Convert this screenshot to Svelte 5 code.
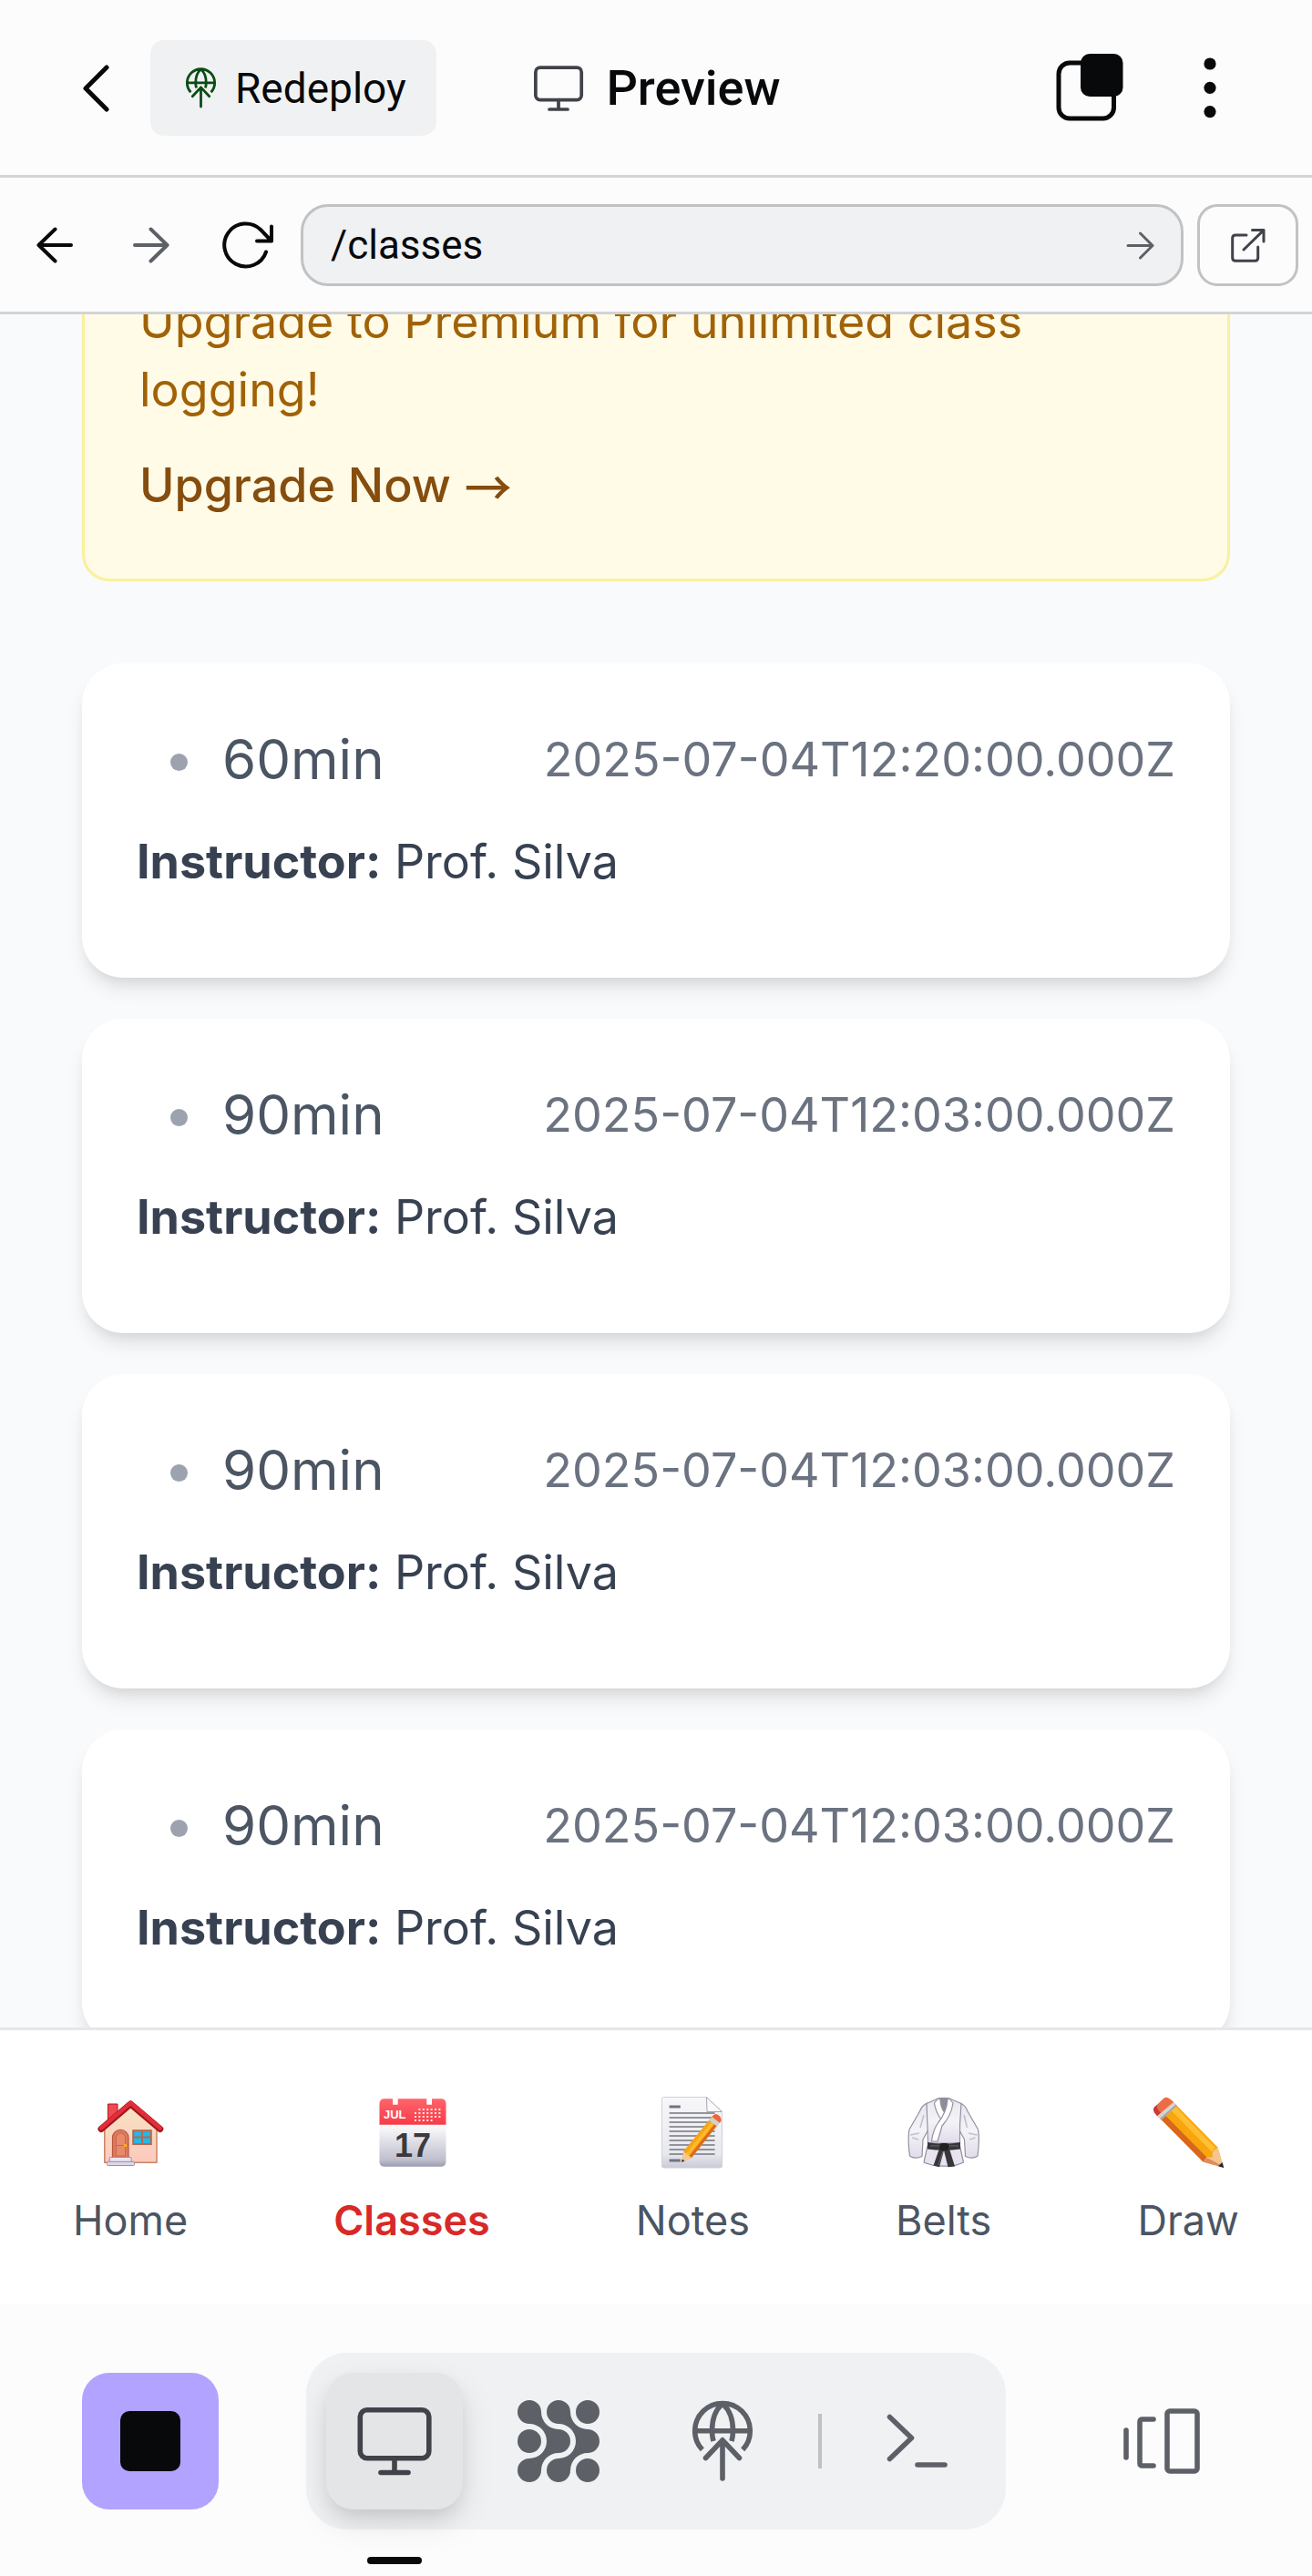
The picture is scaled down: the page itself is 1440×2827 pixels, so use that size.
<script>
  let path = $state('/classes');

  const classes = [
    { duration: '60min', date: '2025-07-04T12:20:00.000Z', instructor: 'Prof. Silva' },
    { duration: '90min', date: '2025-07-04T12:03:00.000Z', instructor: 'Prof. Silva' },
    { duration: '90min', date: '2025-07-04T12:03:00.000Z', instructor: 'Prof. Silva' },
    { duration: '90min', date: '2025-07-04T12:03:00.000Z', instructor: 'Prof. Silva' }
  ];

  const noteLines = [24, 29, 34, 39, 44, 49, 54, 59, 64, 69];
  const calendarRows = [
    { y: 20, from: 1, to: 6 },
    { y: 24, from: 0, to: 6 },
    { y: 28, from: 0, to: 6 },
    { y: 32, from: 0, to: 4 }
  ];
</script>

{#snippet monitor()}
  <svg class="line" viewBox="0 0 90 90" aria-hidden="true">
    <rect x="7.3" y="10.8" width="75.5" height="53" rx="7.5" />
    <path d="M45 64V79M30 79.5H60" />
  </svg>
{/snippet}

{#snippet globe()}
  <svg class="line" viewBox="0 0 90 90" aria-hidden="true">
    <path stroke-linecap="butt" d="M22.8 54.4A30.3 30.3 0 1 1 67.2 54.4M15 33.7H75M44 5C36 12 33.5 24 33.5 34C33.5 38 34 41 35 45M46 5C54 12 56.5 24 56.5 34C56.5 38 56 41 55 45" />
    <path d="M26.5 63.5L45 43.8L63.5 63.5M45 44V86" />
  </svg>
{/snippet}

{#snippet homeIcon()}
  <svg viewBox="0 0 90 90" aria-hidden="true">
    <defs>
      <linearGradient id="wall" x1="0" y1="0" x2="0" y2="1">
        <stop offset="0" stop-color="#f7e3c3" /><stop offset="1" stop-color="#fdc9bd" />
      </linearGradient>
    </defs>
    <path d="M20.5 37V14H31V28Z" fill="#ee4a52" stroke="#a81c24" stroke-width="1" />
    <path d="M16.8 38L45 15L74 38V78.3H16.8Z" fill="url(#wall)" stroke="#c98467" stroke-width="1.5" />
    <path d="M13 41.5L45.3 14L77.8 41.5" fill="none" stroke="#a3141d" stroke-width="7" stroke-linecap="round" stroke-linejoin="round" />
    <path d="M13 40.5L45.3 12.8L77.8 40.5" fill="none" stroke="#e12f38" stroke-width="4.5" stroke-linecap="round" stroke-linejoin="round" />
    <path d="M25.5 72.5V51A8.7 8.7 0 0 1 43 51V72.5Z" fill="#df7a5c" stroke="#b9573f" stroke-width="1.2" />
    <path d="M29.3 71V51A5 5 0 0 1 39.5 51V71ZM29.3 59.5H39.5" fill="#e78a6b" stroke="#c9654a" stroke-width="1" />
    <circle cx="39.5" cy="59.5" r="1.7" fill="#ffb300" />
    <rect x="48.2" y="43.2" width="19.6" height="14.8" fill="#22b8e8" stroke="#b5684e" stroke-width="2" />
    <path d="M58 43V58M48 50.6H68" stroke="#b5684e" stroke-width="2" />
    <rect x="22.2" y="72.5" width="24" height="5" rx="1" fill="#ece4f2" stroke="#9a8fa8" stroke-width="1" />
    <rect x="19.5" y="77.3" width="30" height="4.2" rx="1" fill="#ded7e8" stroke="#9a8fa8" stroke-width="1" />
  </svg>
{/snippet}

{#snippet calendarIcon()}
  <svg viewBox="0 0 90 90" aria-hidden="true">
    <defs>
      <linearGradient id="sheet" x1="0" y1="0" x2="0" y2="1">
        <stop offset="0.4" stop-color="#fbfbfc" /><stop offset="0.9" stop-color="#bfbfcf" /><stop offset="1" stop-color="#9c9bb0" />
      </linearGradient>
      <linearGradient id="band" x1="0" y1="0" x2="0" y2="1">
        <stop offset="0" stop-color="#ff646b" /><stop offset="1" stop-color="#f73c49" />
      </linearGradient>
    </defs>
    <rect x="9.5" y="8.2" width="73" height="74.5" rx="5" fill="url(#sheet)" />
    <path d="M9.5 36.7V13.2A5 5 0 0 1 14.5 8.2H24V14.5H29.5V8.2H61.5V14.5H67V8.2H77.5A5 5 0 0 1 82.5 13.2V36.7Z" fill="url(#band)" />
    <path d="M24 7.5H29.5V14.5H24ZM61.5 7.5H67V14.5H61.5Z" fill="#fff" />
    <text class="month" x="14" y="30">JUL</text>
    {#each calendarRows as row}
      {#each [0, 1, 2, 3, 4, 5, 6] as col}
        {#if col >= row.from && col <= row.to}
          <rect x={48 + col * 4.4} y={row.y - 1} width="2" height="2" fill="#ffe6e7" />
        {/if}
      {/each}
    {/each}
    <text class="day" x="46" y="72">17</text>
  </svg>
{/snippet}

{#snippet notesIcon()}
  <svg viewBox="0 0 90 90" aria-hidden="true">
    <defs>
      <linearGradient id="paper" x1="0" y1="0" x2="0" y2="1">
        <stop offset="0" stop-color="#f7f7fa" /><stop offset="0.8" stop-color="#e8e8ef" /><stop offset="1" stop-color="#cbcbd8" />
      </linearGradient>
    </defs>
    <path d="M13.5 6.5H60.5L77.5 24V82A2 2 0 0 1 75.5 84H13.5A2 2 0 0 1 11.5 82V8.5A2 2 0 0 1 13.5 6.5Z" fill="url(#paper)" stroke="#d0d0d9" stroke-width="1" />
    <path d="M60.5 6.5L61 22.5H77.5Z" fill="#fbfbfc" stroke="#a5a5ad" stroke-width="1" />
    <path d="M19.6 17H31.8M19.6 76H31.8" stroke="#73737c" stroke-width="2.8" />
    {#each noteLines as y}
      <path d="M19.6 {y}H69.6" stroke="#74747c" stroke-width="1.5" />
    {/each}
    <path d="M68 26L76.5 32L44 73L33.5 77.5L35 66Z" fill="#f7a416" />
    <path d="M70.5 28L73.5 30.5L40 71.5L37.5 69Z" fill="#ffb928" />
    <path d="M76.5 32L44 73L41.5 71L73.8 30Z" fill="#d96d1c" />
    <path d="M35 66L44 73L33.5 77.5Z" fill="#f5c894" />
    <path d="M33.8 74.5L36.5 76.5L33 78Z" fill="#303038" />
    <path d="M63.5 32L71.8 38.5L75 34.5L66.5 28Z" fill="#d3d1cf" />
    <path d="M66.5 28L69 25.5Q72 24 75.5 28Q78 32 75 34.8Z" fill="#f0663b" />
  </svg>
{/snippet}

{#snippet beltsIcon()}
  <svg viewBox="0 0 90 90" aria-hidden="true">
    <defs>
      <linearGradient id="cloth" x1="0" y1="0" x2="0" y2="1">
        <stop offset="0" stop-color="#e6e6ed" /><stop offset="0.5" stop-color="#f4f4f8" /><stop offset="1" stop-color="#e2dbeb" />
      </linearGradient>
    </defs>
    <g stroke="#93919e" stroke-width="1.2" stroke-linejoin="round">
      <path d="M27 13Q21 15 18.5 22L7 42Q5 51 7.5 71Q13 75 21 71.5L22 53L28 42Z" fill="url(#cloth)" />
      <path d="M62.5 13Q68.5 15 71 22L82.5 42Q84.5 51 82 71Q76 75 68.5 71.5L67.5 53L61.5 42Z" fill="url(#cloth)" />
      <path d="M27 60L23 78Q34 83 45 82Q57 83 66.5 78L62.5 60Z" fill="#e9e2f1" />
      <path d="M38.5 8L26 13.5Q27 36 27.5 57H62.5Q62 36 64 13.5L51 8Z" fill="url(#cloth)" />
      <path d="M39 8Q45 6.5 51 8L52 13L45 25L38 13Z" fill="#8e8c99" />
      <path d="M38.5 8L34.5 13Q36 23 42 31L46 24Q41 17 41 9Z" fill="#fff" />
      <path d="M51 8L55 13Q53 27 43 38L38 55H31.5Q33 42 39 34Q48 23 49 9Z" fill="#fff" />
    </g>
    <path d="M8 48L18 46M10 51L17 53M81.5 48L72 46M79.5 51L73 53M19 40L23 26M70.5 40L67 26" stroke="#c2c0cd" stroke-width="1.6" fill="none" />
    <path d="M27 56Q45 59 63 56V63.5Q45 66 27 63.5Z" fill="#37373a" />
    <path d="M41 60L33.5 81.5L40 83.3L45 65L49.5 83.3L57 82.5L50 60Z" fill="#37373a" />
    <rect x="40.5" y="57" width="9.5" height="8" rx="2.5" fill="#202023" />
    <path d="M30 60L40 60M51 60H61M44 66L39 81" stroke="#68686d" stroke-width="1" />
  </svg>
{/snippet}

{#snippet pencilIcon()}
  <svg viewBox="0 0 90 90" aria-hidden="true">
    <path d="M27 10L77.5 61.5L84 83.7L61.5 77.5L10.5 26Z" fill="#f9a60c" />
    <path d="M10.5 26L61.5 77.5L66 73L15 21.5Z" fill="#d7671e" />
    <path d="M21 15.5L71 66.5L75 62L26 11.5Z" fill="#ffbf35" />
    <path d="M77.5 61.5L84 83.7L61.5 77.5L66 72L71.5 73L72 66.5Z" fill="#f6c48f" />
    <path d="M61.5 77.5L84 83.7L79 80L66 73Z" fill="#de8b61" />
    <path d="M82.5 78L84.3 84L78 82.2Z" fill="#26262e" />
    <path d="M11 27L29 12L33 16L15.5 31.5Z" fill="#d7d3d0" />
    <path d="M15.5 31.5L33 16L31.5 14.5L14 30Z" fill="#aaa5a2" />
    <path d="M11 27Q5 21 8 17.5L18.5 7.5Q22 4.5 29 12Z" fill="#ee6c45" />
    <path d="M11 27Q5 21 8 17.5L11 14.7Q10 20 15 23.6Z" fill="#c93b39" />
  </svg>
{/snippet}

<div class="app">
  <header class="topbar">
    <div class="top-left">
      <button class="plain back" aria-label="Back">
        <svg class="chevron" viewBox="0 0 30 52" aria-hidden="true"><path d="M27 3L4 26L27 49" /></svg>
      </button>
      <button class="redeploy">{@render globe()}<span>Redeploy</span></button>
    </div>
    <h1>{@render monitor()}<span>Preview</span></h1>
    <div class="top-right">
      <button class="plain tool" aria-label="Windows">
        <svg class="windows" viewBox="0 0 74 76" aria-hidden="true">
          <rect x="3" y="10" width="60.5" height="61" rx="12" fill="none" stroke="currentColor" stroke-width="5" />
          <rect x="27" y="0" width="46.5" height="47" rx="10" fill="currentColor" />
        </svg>
      </button>
      <button class="plain tool" aria-label="More options">
        <svg class="dots" viewBox="0 0 16 68" aria-hidden="true">
          <circle cx="8" cy="7" r="6.6" /><circle cx="8" cy="33.300" r="6.6" /><circle cx="8" cy="59.600" r="6.6" />
        </svg>
      </button>
    </div>
  </header>

  <div class="browser">
    <div class="history">
      <button class="plain step" aria-label="Go back">
        <svg viewBox="0 0 60 60" aria-hidden="true"><path d="M30.5 12.5L12.5 30L30.5 47.5M12.5 30H48" /></svg>
      </button>
      <button class="plain step dim" aria-label="Go forward">
        <svg viewBox="0 0 60 60" aria-hidden="true"><path d="M30.5 12.5L48.5 30L30.5 47.5M48.5 30H13" /></svg>
      </button>
      <button class="plain step" aria-label="Reload">
        <svg viewBox="0 0 60 60" aria-hidden="true"><path d="M52 37.5A23.5 23.5 0 1 1 46 13L58 25.5M58 9.5V25.5H42" /></svg>
      </button>
    </div>
    <div class="location">
      <form class="address" onsubmit={(e) => e.preventDefault()}>
        <input type="text" aria-label="Path" bind:value={path} />
        <button class="plain go" aria-label="Go">
          <svg viewBox="0 0 45 45" aria-hidden="true"><path d="M22.5 9L36 22.5L22.5 36M36 22.5H9" /></svg>
        </button>
      </form>
      <button class="external" aria-label="Open in new tab">
        <svg viewBox="0 0 45 45" aria-hidden="true"><path d="M21 11H9Q5.7 11 5.7 14.3V36Q5.7 39.3 9 39.3H30.5Q33.7 39.3 33.7 36V24M18 27L40 5.5M27.5 5.5H40V18" /></svg>
      </button>
    </div>
  </div>

  <main>
    <div class="content">
      <section class="banner">
        <p>Upgrade to Premium for unlimited class logging!</p>
        <a href="#upgrade">Upgrade Now <span class="arrow">→</span></a>
      </section>
      <div class="cards">
        {#each classes as item}
          <article>
            <div class="row">
              <span class="duration"><i></i>{item.duration}</span>
              <time datetime={item.date}>{item.date}</time>
            </div>
            <p><strong>Instructor:</strong> {item.instructor}</p>
          </article>
        {/each}
      </div>
    </div>
  </main>

  <nav aria-label="Sections">
    <a href="#home">{@render homeIcon()}<span>Home</span></a>
    <a href="#classes" class="current" aria-current="page">{@render calendarIcon()}<span>Classes</span></a>
    <a href="#notes">{@render notesIcon()}<span>Notes</span></a>
    <a href="#belts">{@render beltsIcon()}<span>Belts</span></a>
    <a href="#draw">{@render pencilIcon()}<span>Draw</span></a>
  </nav>

  <footer>
    <button class="tile stop" aria-label="Stop"><span></span></button>
    <div class="dock">
      <button class="tile active" aria-label="Preview">{@render monitor()}</button>
      <button class="tile" aria-label="Agent">
        <svg viewBox="0 0 90 90" fill="currentColor" aria-hidden="true">
          <path d="M26 13A19 19 0 0 0 45 32A13 13 0 0 1 45 58A19 19 0 0 0 26 77A13 13 0 1 1 13 64A19 19 0 0 0 13 26A13 13 0 1 1 26 13Z" />
          <path d="M58 13A19 19 0 0 0 77 32A13 13 0 0 1 77 58A19 19 0 0 0 58 77A13 13 0 1 1 45 64A19 19 0 0 0 45 26A13 13 0 1 1 58 13Z" />
          <circle cx="77" cy="13" r="13" /><circle cx="13" cy="45" r="13" /><circle cx="77" cy="77" r="13" />
        </svg>
      </button>
      <button class="tile" aria-label="Deploy">{@render globe()}</button>
      <span class="divider"></span>
      <button class="tile" aria-label="Console">
        <svg class="line" viewBox="0 0 90 90" aria-hidden="true"><path d="M14.5 18.5L38.5 41.5L14.5 64.5M45 71H75" /></svg>
      </button>
    </div>
    <button class="tile" aria-label="Switch tabs">
      <svg class="line" viewBox="0 0 90 90" aria-hidden="true">
        <path d="M6 33V63M36 21H24Q21 21 21 24V69Q21 72 24 72H36" />
        <rect x="51" y="12" width="33" height="66" rx="3" />
      </svg>
    </button>
  </footer>
</div>

<style>
  :global(body) {
    margin: 0;
    background: #fcfcfc;
  }

  .app {
    display: flex;
    flex-direction: column;
    height: 100vh;
    overflow: hidden;
    color: #07090b;
    font-family: Inter, sans-serif;
  }

  .app :global(*) {
    box-sizing: border-box;
  }

  button {
    display: flex;
    align-items: center;
    justify-content: center;
    padding: 0;
    border: 0;
    color: inherit;
    font: inherit;
  }

  svg {
    display: block;
    flex: none;
  }

  .plain {
    background: none;
  }

  .line {
    fill: none;
    stroke: currentColor;
    stroke-width: 5.6;
    stroke-linecap: round;
    stroke-linejoin: round;
  }

  .topbar {
    display: grid;
    grid-template-columns: 1fr auto 1fr;
    align-items: center;
    padding: 44px 72px 43px;
    border-bottom: 3px solid #d2d4d6;
    font-family: Roboto, sans-serif;
  }

  .top-left {
    display: flex;
    align-items: center;
    gap: 27px;
  }

  .back {
    width: 66px;
    height: 105px;
  }

  .chevron {
    width: 30px;
    height: 52px;
    fill: none;
    stroke: currentColor;
    stroke-width: 5;
    stroke-linecap: round;
    stroke-linejoin: round;
  }

  .redeploy {
    gap: 15px;
    height: 105px;
    padding: 0 33px;
    border-radius: 15px;
    background: #f0f1f3;
    font-size: 46px;
  }

  .redeploy :global(svg) {
    width: 45px;
    height: 45px;
    color: #0a4d12;
  }

  h1 {
    display: flex;
    align-items: center;
    gap: 22px;
    margin: 0;
    font-size: 54px;
    font-weight: 500;
    line-height: 75px;
  }

  h1 :global(svg) {
    width: 60px;
    height: 60px;
    color: #40434a;
  }

  .top-right {
    display: flex;
    justify-content: flex-end;
    gap: 52px;
  }

  .tool {
    width: 80px;
    height: 105px;
  }

  .windows {
    width: 74px;
    height: 76px;
  }

  .dots {
    width: 16px;
    height: 68px;
    fill: currentColor;
  }

  .browser {
    display: flex;
    align-items: center;
    gap: 30px;
    padding: 29px 15px 28px 30px;
    border-bottom: 3px solid #d2d4d6;
  }

  .history {
    display: flex;
    gap: 45px;
  }

  .step svg {
    width: 60px;
    height: 60px;
  }

  .step path,
  .go path,
  .external path {
    fill: none;
    stroke: currentColor;
    stroke-width: 4;
    stroke-linecap: round;
    stroke-linejoin: round;
  }

  .dim,
  .go {
    color: #5d6067;
  }

  .location {
    display: flex;
    flex: 1;
    gap: 15px;
    min-width: 0;
  }

  .address {
    display: flex;
    flex: 1;
    align-items: center;
    min-width: 0;
    height: 90px;
    padding: 0 22px 0 30px;
    border: 3px solid #c0c2c4;
    border-radius: 30px;
    background: #f0f1f3;
  }

  .address input {
    flex: 1;
    min-width: 0;
    padding: 0;
    border: 0;
    outline: 0;
    background: none;
    color: inherit;
    font-family: Roboto, sans-serif;
    font-size: 44px;
    line-height: 60px;
  }

  .go svg,
  .external svg {
    width: 45px;
    height: 45px;
  }

  .go path,
  .external path {
    stroke-width: 3;
  }

  .external {
    width: 111px;
    height: 90px;
    border: 3px solid #c0c2c4;
    border-radius: 22px;
    background: #fcfcfc;
    color: #40434a;
  }

  main {
    flex: 1;
    min-height: 0;
    overflow: hidden;
    background: #f9fafc;
  }

  /* The page is scrolled part of the way into the banner. */
  .content {
    margin-top: -93px;
    padding: 0 90px;
  }

  .banner {
    padding: 60px 60px 65px;
    border: 3px solid #fbf09c;
    border-radius: 30px;
    background: #fffbe7;
    color: #a16207;
    font-size: 52px;
    line-height: 75px;
  }

  .banner p {
    max-width: 1040px;
    margin: 0 0 30px;
  }

  .banner a {
    display: flex;
    gap: 15px;
    color: #854d0e;
    font-weight: 500;
    text-decoration: none;
  }

  .arrow {
    font-family: "Noto Sans CJK SC", sans-serif;
  }

  .cards {
    display: flex;
    flex-direction: column;
    gap: 45px;
    margin-top: 90px;
  }

  article {
    padding: 60px 60px 90px;
    border-radius: 45px;
    background: #fff;
    box-shadow: 0 15px 22px -4px rgb(0 0 0 / 10%), 0 8px 15px -8px rgb(0 0 0 / 10%);
    color: #374151;
    font-size: 52px;
    line-height: 75px;
  }

  .row {
    display: flex;
    align-items: center;
    justify-content: space-between;
    margin-bottom: 30px;
  }

  .duration {
    display: flex;
    align-items: center;
    gap: 38px;
    padding-left: 37px;
    color: #4b5563;
    font-size: 60px;
    line-height: 90px;
  }

  .duration i {
    width: 19px;
    height: 19px;
    margin-top: 7px;
    border-radius: 50%;
    background: #9ca3af;
  }

  time {
    color: #6b7280;
  }

  article p {
    margin: 0;
  }

  article strong {
    font-weight: 700;
  }

  nav {
    display: flex;
    justify-content: space-around;
    padding: 67px 0 61px;
    border-top: 3px solid #e5e7eb;
    background: #fff;
  }

  nav a {
    display: flex;
    flex-direction: column;
    align-items: center;
    gap: 22px;
    color: #4b5563;
    font-size: 45px;
    line-height: 60px;
    text-decoration: none;
  }

  nav .current {
    color: #d92828;
    font-weight: 600;
  }

  nav a svg {
    width: 90px;
    height: 90px;
  }

  .month {
    fill: #fff;
    font: 700 13px "Liberation Sans", sans-serif;
  }

  .day {
    fill: #3b3b3d;
    font: 700 36px "Liberation Sans", sans-serif;
    text-anchor: middle;
  }

  footer {
    display: flex;
    align-items: center;
    justify-content: space-between;
    padding: 54px 90px 51px;
  }

  .tile {
    position: relative;
    width: 150px;
    height: 150px;
    border-radius: 30px;
    background: none;
    color: #5d6067;
  }

  .tile :global(svg) {
    width: 90px;
    height: 90px;
  }

  .stop {
    background: #b1a3ff;
  }

  .stop span {
    width: 66px;
    height: 66px;
    border-radius: 10px;
    background: #07090b;
  }

  .dock {
    display: flex;
    align-items: center;
    gap: 30px;
    padding: 22px;
    border-radius: 45px;
    background: #f0f1f3;
  }

  .active {
    background: #e4e5e7;
    box-shadow: 0 15px 37px rgb(0 0 0 / 10%), 0 10px 22px -6px rgb(0 0 0 / 12%);
    color: #40434a;
  }

  /* Marks the open tool at the bottom edge of the window. */
  .active::after {
    position: absolute;
    bottom: -60px;
    left: 45px;
    width: 60px;
    height: 8px;
    border-radius: 4px;
    background: #07090b;
    content: "";
  }

  .divider {
    width: 4px;
    height: 60px;
    background: #c0c1c3;
  }
</style>
